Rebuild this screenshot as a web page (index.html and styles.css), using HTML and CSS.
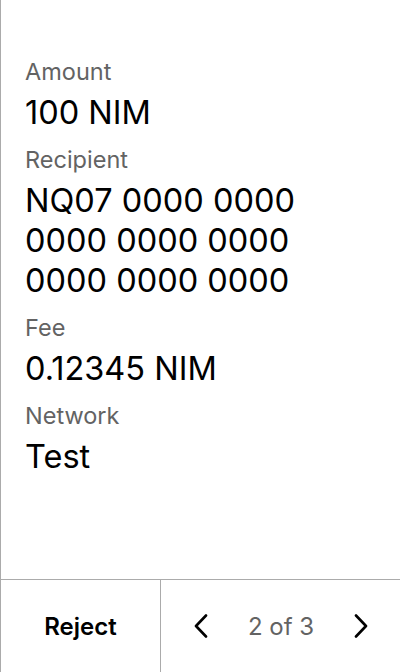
FILE: index.html
```html
<!DOCTYPE html>
<html>
<head>
<meta charset="utf-8">
<link rel="stylesheet" href="styles.css">
</head>
<body>
<div class="screen">
  <main class="details">
    <div class="label">Amount</div>
    <div class="value">100 NIM</div>
    <div class="label">Recipient</div>
    <div class="value">NQ07 0000 0000<br>0000 0000 0000<br>0000 0000 0000</div>
    <div class="label">Fee</div>
    <div class="value">0.12345 NIM</div>
    <div class="label">Network</div>
    <div class="value">Test</div>
  </main>
  <footer class="bar">
    <div class="reject">Reject</div>
    <div class="pager">
      <svg class="chev" viewBox="0 0 14 24" width="14" height="24"><path d="M12 1.5 L2 12 L12 22.5" fill="none" stroke="#000" stroke-width="2.6" stroke-linecap="round" stroke-linejoin="round"/></svg>
      <span class="count">2 of 3</span>
      <svg class="chev" viewBox="0 0 14 24" width="14" height="24"><path d="M2 1.5 L12 12 L2 22.5" fill="none" stroke="#000" stroke-width="2.6" stroke-linecap="round" stroke-linejoin="round"/></svg>
    </div>
  </footer>
</div>
</body>
</html>
```

FILE: styles.css
```css
html, body {
  margin: 0;
  padding: 0;
  background: #fff;
}
body {
  font-family: Inter, "Noto Sans", sans-serif;
  color: #000;
}
.screen {
  width: 400px;
  height: 672px;
  box-sizing: border-box;
  border-left: 1px solid #ababab;
  display: flex;
  flex-direction: column;
}
.details {
  flex: 1;
  padding: 45px 0 0 24px;
}
.label {
  font-size: 23.5px;
  line-height: 28px;
  padding-top: 13px;
  margin-bottom: 7px;
  color: #636363;
}
.value {
  font-size: 32.5px;
  line-height: 40px;
  color: #000;
}
.bar {
  height: 92px;
  border-top: 1px solid #ababab;
  display: flex;
}
.reject {
  width: 159px;
  border-right: 1px solid #ababab;
  display: flex;
  align-items: center;
  justify-content: center;
  font-size: 24px;
  font-weight: 600;
}
.pager {
  flex: 1;
  display: flex;
  align-items: center;
  justify-content: space-between;
  padding: 0 32px 0 33px;
}
.count {
  font-size: 24px;
  color: #636363;
}
```
